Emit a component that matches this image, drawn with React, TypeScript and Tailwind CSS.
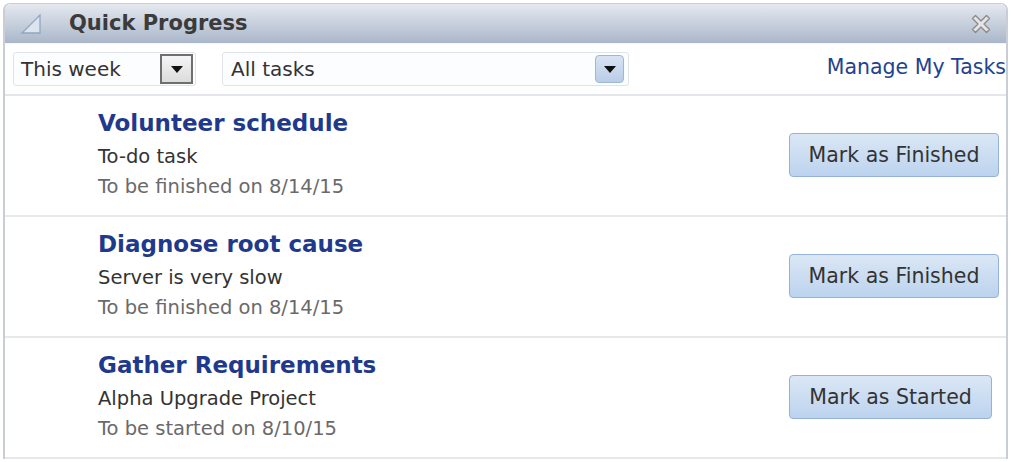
import React from "react";

const font = { fontFamily: '"DejaVu Sans", Tahoma, sans-serif' };

function Row({ title, sub, date, btn, btnW }: { title: string; sub: string; date: string; btn: string; btnW: string }) {
  return (
    <div className="flex h-[121px] items-start border-b-2 border-[#e6e8eb]">
      <div className="flex flex-col pl-[93px] pt-[11px]">
        <div className="text-[23px] font-bold leading-[32px] text-[#1f3a8c]">{title}</div>
        <div className="mt-[4px] text-[19.5px] leading-[27px] text-[#333]">{sub}</div>
        <div className="mt-[3px] text-[19.5px] leading-[27px] text-[#6a6a6a]">{date}</div>
      </div>
      <div className="ml-auto w-[217px] mt-[37px]">
        <button
          className={`h-[44px] ${btnW} rounded-[4px] border border-[#93b3d8] bg-gradient-to-b from-[#dbe7f5] to-[#bcd3ee] text-[20.5px] text-[#333]`}
          style={font}
        >
          {btn}
        </button>
      </div>
    </div>
  );
}

export default function App() {
  return (
    <div className="w-[1011px] h-[462px] overflow-hidden bg-white" style={font}>
      <div className="ml-[3px] mt-[3px] w-[1005px] rounded-t-[7px] border-x-2 border-t border-[#c9ced6] overflow-hidden">
        <div className="flex h-[39px] items-center bg-gradient-to-b from-[#e5e9ef] to-[#aab7ca]">
          <svg width="22" height="22" viewBox="0 0 22 22" className="ml-[15px]">
            <path d="M20 2 L20 20 L2 20 Z" fill="#dde4ee" stroke="#8fa6c4" strokeWidth="1.3" />
          </svg>
          <div className="ml-[27px] text-[21px] font-bold text-[#3b3b3b]">Quick Progress</div>
          <svg width="24" height="24" viewBox="0 0 24 24" className="ml-auto mr-[13px]">
            <path
              d="M3.5 6.5 L6.5 3.5 L12 9 L17.5 3.5 L20.5 6.5 L15 12 L20.5 17.5 L17.5 20.5 L12 15 L6.5 20.5 L3.5 17.5 L9 12 Z"
              fill="#e6e6e6"
              stroke="#8a8a8a"
              strokeWidth="1.4"
              strokeLinejoin="round"
            />
          </svg>
        </div>
        <div className="flex h-[53px] items-center border-b-2 border-t border-[#e3e6ea] border-t-[#f4f6f9] bg-white">
          <div className="ml-[8px] flex h-[34px] w-[183px] items-center rounded-[3px] border border-[#e0e3e8] bg-[#fcfdff]">
            <span className="ml-[7px] text-[20px] text-[#333]">This week</span>
            <div className="ml-auto mr-[2px] flex h-[30px] w-[33px] items-center justify-center border-2 border-[#6e6e6e] bg-gradient-to-b from-[#f4f4f4] to-[#dcdcdc]">
              <svg width="12" height="7" viewBox="0 0 12 7"><path d="M0 0 L12 0 L6 7 Z" fill="#111" /></svg>
            </div>
          </div>
          <div className="ml-[26px] flex h-[34px] w-[407px] items-center rounded-[3px] border border-[#e0e3e8] bg-[#fcfdff]">
            <span className="ml-[8px] text-[20px] text-[#333]">All tasks</span>
            <div className="ml-auto mr-[4px] flex h-[28px] w-[29px] items-center justify-center rounded-[4px] border border-[#9fb6d4] bg-gradient-to-b from-[#d8e4f3] to-[#b9cde7]">
              <svg width="12" height="7" viewBox="0 0 12 7"><path d="M0 0 L12 0 L6 7 Z" fill="#111" /></svg>
            </div>
          </div>
          <a className="ml-auto mb-[3px] text-[20.5px] text-[#23428f] whitespace-nowrap">Manage My Tasks</a>
        </div>
        <Row title="Volunteer schedule" sub="To-do task" date="To be finished on 8/14/15" btn="Mark as Finished" btnW="w-[210px]" />
        <Row title="Diagnose root cause" sub="Server is very slow" date="To be finished on 8/14/15" btn="Mark as Finished" btnW="w-[210px]" />
        <Row title="Gather Requirements" sub="Alpha Upgrade Project" date="To be started on 8/10/15" btn="Mark as Started" btnW="w-[203px]" />
      </div>
    </div>
  );
}
